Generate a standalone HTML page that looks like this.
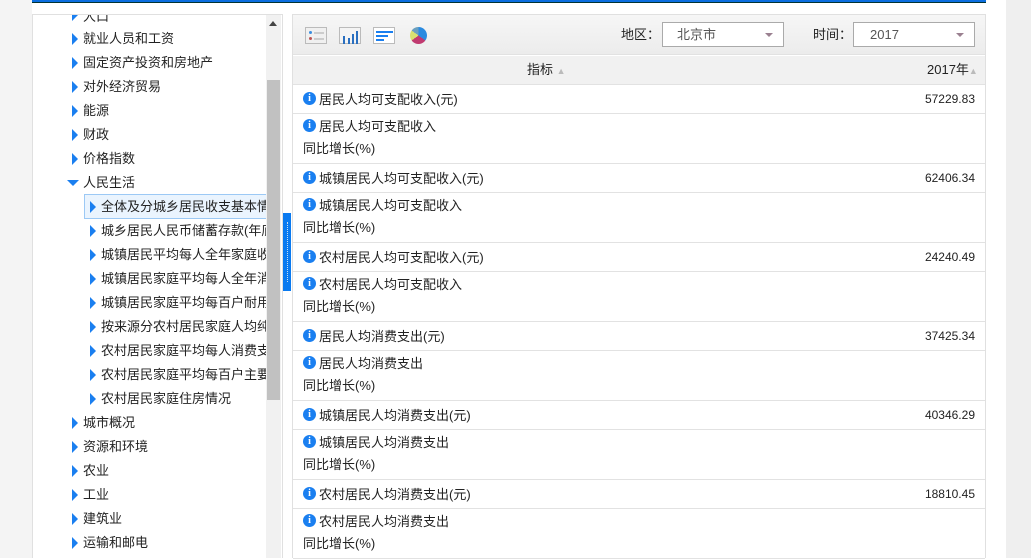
<!DOCTYPE html>
<html><head><meta charset="utf-8"><style>
*{margin:0;padding:0;box-sizing:border-box}
body{width:1031px;height:558px;overflow:hidden;background:#fff;font-family:"Liberation Sans","Noto Sans CJK SC",sans-serif;font-size:13px;color:#222;position:relative}
.abs{position:absolute}
.tri{position:absolute;width:0;height:0;border-top:6px solid transparent;border-bottom:6px solid transparent;border-left:6px solid #1a7ff0}
.tri-d{position:absolute;width:0;height:0;border-left:6px solid transparent;border-right:6px solid transparent;border-top:6px solid #1a7ff0}
.ti{position:absolute;white-space:nowrap;line-height:24px;height:24px}
.row{position:absolute;left:293px;width:692px;border-bottom:1px solid #e2e2e2}
.info{display:inline-block;width:13px;height:13px;border-radius:50%;background:#1a7ff0;color:#fff;font-size:10px;font-weight:bold;text-align:center;line-height:13px;vertical-align:middle;position:relative;top:-2px;margin-right:3px;font-family:"Liberation Serif",serif}
.num{position:absolute;right:10px;top:0;line-height:29px;font-size:12px}
.sel{position:absolute;height:25px;border:1px solid #aaa;background:#fff;color:#555;line-height:23px;padding-left:14px}
.sel:after{content:"";position:absolute;right:10px;top:10px;border-left:4px solid transparent;border-right:4px solid transparent;border-top:4px solid #9a8090}
</style></head><body>
<div class="abs" style="left:0;top:0;width:32px;height:558px;background:#f4f4f4"></div>
<div class="abs" style="left:1006px;top:0;width:25px;height:558px;background:#efefef"></div>
<div class="abs" style="left:32px;top:0;width:954px;height:3px;background:#0a6de0;border-bottom:1px solid #033"></div>

<div class="abs" style="left:32px;top:14px;width:251px;height:544px;border:1px solid #e0e0e0;border-bottom:none;overflow:hidden"></div>
<div class="abs" style="left:266px;top:15px;width:15px;height:543px;background:#f1f1f1"></div>
<div class="abs" style="left:267px;top:80px;width:13px;height:320px;background:#c1c1c1"></div>
<div class="abs" style="left:269px;top:21px;border-left:4px solid transparent;border-right:4px solid transparent;border-bottom:5px solid #444"></div>
<div class="abs" style="left:283px;top:213px;width:8px;height:78px;background:#0a7af0"></div>
<div class="abs" style="left:287px;top:222px;width:1px;height:60px;border-left:1px dotted #cde"></div>

<div class="abs" style="left:33px;top:15px;width:233px;height:543px;overflow:hidden">
<div class="tri" style="left:39px;top:-6px"></div><div class="ti" style="left:50px;top:-10px">人口</div>
<div class="tri" style="left:39px;top:18px"></div><div class="ti" style="left:50px;top:12px">就业人员和工资</div>
<div class="tri" style="left:39px;top:42px"></div><div class="ti" style="left:50px;top:36px">固定资产投资和房地产</div>
<div class="tri" style="left:39px;top:66px"></div><div class="ti" style="left:50px;top:60px">对外经济贸易</div>
<div class="tri" style="left:39px;top:90px"></div><div class="ti" style="left:50px;top:84px">能源</div>
<div class="tri" style="left:39px;top:114px"></div><div class="ti" style="left:50px;top:108px">财政</div>
<div class="tri" style="left:39px;top:138px"></div><div class="ti" style="left:50px;top:132px">价格指数</div>
<div class="tri-d" style="left:34px;top:165px"></div><div class="ti" style="left:50px;top:156px">人民生活</div>
<div class="abs" style="left:51px;top:179px;width:183px;height:25px;background:#eaf4fe;border:1px solid #9cc9f5"></div>
<div class="tri" style="left:57px;top:186px"></div><div class="ti" style="left:68px;top:180px">全体及分城乡居民收支基本情况</div>
<div class="tri" style="left:57px;top:210px"></div><div class="ti" style="left:68px;top:204px">城乡居民人民币储蓄存款(年底余额)</div>
<div class="tri" style="left:57px;top:234px"></div><div class="ti" style="left:68px;top:228px">城镇居民平均每人全年家庭收入来源</div>
<div class="tri" style="left:57px;top:258px"></div><div class="ti" style="left:68px;top:252px">城镇居民家庭平均每人全年消费支出</div>
<div class="tri" style="left:57px;top:282px"></div><div class="ti" style="left:68px;top:276px">城镇居民家庭平均每百户耐用消费品</div>
<div class="tri" style="left:57px;top:306px"></div><div class="ti" style="left:68px;top:300px">按来源分农村居民家庭人均纯收入</div>
<div class="tri" style="left:57px;top:330px"></div><div class="ti" style="left:68px;top:324px">农村居民家庭平均每人消费支出</div>
<div class="tri" style="left:57px;top:354px"></div><div class="ti" style="left:68px;top:348px">农村居民家庭平均每百户主要耐用品</div>
<div class="tri" style="left:57px;top:378px"></div><div class="ti" style="left:68px;top:372px">农村居民家庭住房情况</div>
<div class="tri" style="left:39px;top:402px"></div><div class="ti" style="left:50px;top:396px">城市概况</div>
<div class="tri" style="left:39px;top:426px"></div><div class="ti" style="left:50px;top:420px">资源和环境</div>
<div class="tri" style="left:39px;top:450px"></div><div class="ti" style="left:50px;top:444px">农业</div>
<div class="tri" style="left:39px;top:474px"></div><div class="ti" style="left:50px;top:468px">工业</div>
<div class="tri" style="left:39px;top:498px"></div><div class="ti" style="left:50px;top:492px">建筑业</div>
<div class="tri" style="left:39px;top:522px"></div><div class="ti" style="left:50px;top:516px">运输和邮电</div>
</div>

<div class="abs" style="left:292px;top:14px;width:694px;height:544px;border:1px solid #e0e0e0;border-bottom:none"></div>
<div class="abs" style="left:293px;top:15px;width:692px;height:40px;background:linear-gradient(#f6f6f6,#ececec);border-bottom:1px solid #e2e2e2"></div>
<div class="abs" style="left:305px;top:27px;width:22px;height:17px;border:1px solid #bbb;background:#f0f0f0">
 <div class="abs" style="left:3px;top:3px;width:3px;height:3px;background:#3a8de0;border-radius:50%"></div><div class="abs" style="left:8px;top:4px;width:10px;height:2px;background:#ccc"></div>
 <div class="abs" style="left:3px;top:9px;width:3px;height:3px;background:#b55;border-radius:50%"></div><div class="abs" style="left:8px;top:10px;width:10px;height:2px;background:#ccc"></div>
</div>
<div class="abs" style="left:339px;top:27px;width:22px;height:17px;border:1px solid #bbb;background:#f4f4f4">
 <div class="abs" style="left:3px;top:8px;width:2px;height:8px;background:#2a6fc0"></div><div class="abs" style="left:8px;top:10px;width:2px;height:6px;background:#2a6fc0"></div><div class="abs" style="left:12px;top:6px;width:2px;height:10px;background:#2a6fc0"></div><div class="abs" style="left:16px;top:3px;width:2px;height:13px;background:#2a6fc0"></div>
</div>
<div class="abs" style="left:373px;top:27px;width:22px;height:17px;border:1px solid #bbb;background:#fff">
 <div class="abs" style="left:2px;top:3px;width:17px;height:2px;background:#1a7ff0"></div><div class="abs" style="left:2px;top:7px;width:12px;height:2px;background:#1a7ff0"></div><div class="abs" style="left:2px;top:11px;width:8px;height:2px;background:#1a7ff0"></div>
</div>
<div class="abs" style="left:410px;top:27px;width:17px;height:17px;border-radius:50%;background:conic-gradient(#2a8ae0 0 35%,#c03a70 35% 65%,#d8e070 65% 85%,#6aa0c0 85%)"></div>
<div class="abs" style="left:621px;top:26px;line-height:18px;font-size:13px">地区：</div>
<div class="sel" style="left:662px;top:22px;width:122px">北京市</div>
<div class="abs" style="left:813px;top:26px;line-height:18px">时间：</div>
<div class="sel" style="left:853px;top:22px;width:122px;padding-left:16px">2017</div>
<div class="abs" style="left:293px;top:56px;width:692px;height:29px;background:#f1f1f1;border-bottom:1px solid #e2e2e2"></div>
<div class="abs" style="left:527px;top:61px;line-height:18px">指标 <span style="color:#bbb;font-size:9px">&#9650;</span></div>
<div class="abs" style="left:927px;top:61px;line-height:18px">2017年<span style="color:#bbb;font-size:9px">&#9650;</span></div>

<div class="row" style="top:85px;height:29px"><div class="abs" style="left:10px;line-height:29px"><span class="info">i</span>居民人均可支配收入(元)</div><div class="num">57229.83</div></div>
<div class="row" style="top:114px;height:50px"><div class="abs" style="left:10px;top:2px;line-height:22px"><span class="info">i</span>居民人均可支配收入<br>同比增长(%)</div></div>
<div class="row" style="top:164px;height:29px"><div class="abs" style="left:10px;line-height:29px"><span class="info">i</span>城镇居民人均可支配收入(元)</div><div class="num">62406.34</div></div>
<div class="row" style="top:193px;height:50px"><div class="abs" style="left:10px;top:2px;line-height:22px"><span class="info">i</span>城镇居民人均可支配收入<br>同比增长(%)</div></div>
<div class="row" style="top:243px;height:29px"><div class="abs" style="left:10px;line-height:29px"><span class="info">i</span>农村居民人均可支配收入(元)</div><div class="num">24240.49</div></div>
<div class="row" style="top:272px;height:50px"><div class="abs" style="left:10px;top:2px;line-height:22px"><span class="info">i</span>农村居民人均可支配收入<br>同比增长(%)</div></div>
<div class="row" style="top:322px;height:29px"><div class="abs" style="left:10px;line-height:29px"><span class="info">i</span>居民人均消费支出(元)</div><div class="num">37425.34</div></div>
<div class="row" style="top:351px;height:50px"><div class="abs" style="left:10px;top:2px;line-height:22px"><span class="info">i</span>居民人均消费支出<br>同比增长(%)</div></div>
<div class="row" style="top:401px;height:29px"><div class="abs" style="left:10px;line-height:29px"><span class="info">i</span>城镇居民人均消费支出(元)</div><div class="num">40346.29</div></div>
<div class="row" style="top:430px;height:50px"><div class="abs" style="left:10px;top:2px;line-height:22px"><span class="info">i</span>城镇居民人均消费支出<br>同比增长(%)</div></div>
<div class="row" style="top:480px;height:29px"><div class="abs" style="left:10px;line-height:29px"><span class="info">i</span>农村居民人均消费支出(元)</div><div class="num">18810.45</div></div>
<div class="row" style="top:509px;height:50px"><div class="abs" style="left:10px;top:2px;line-height:22px"><span class="info">i</span>农村居民人均消费支出<br>同比增长(%)</div></div>
</body></html>
